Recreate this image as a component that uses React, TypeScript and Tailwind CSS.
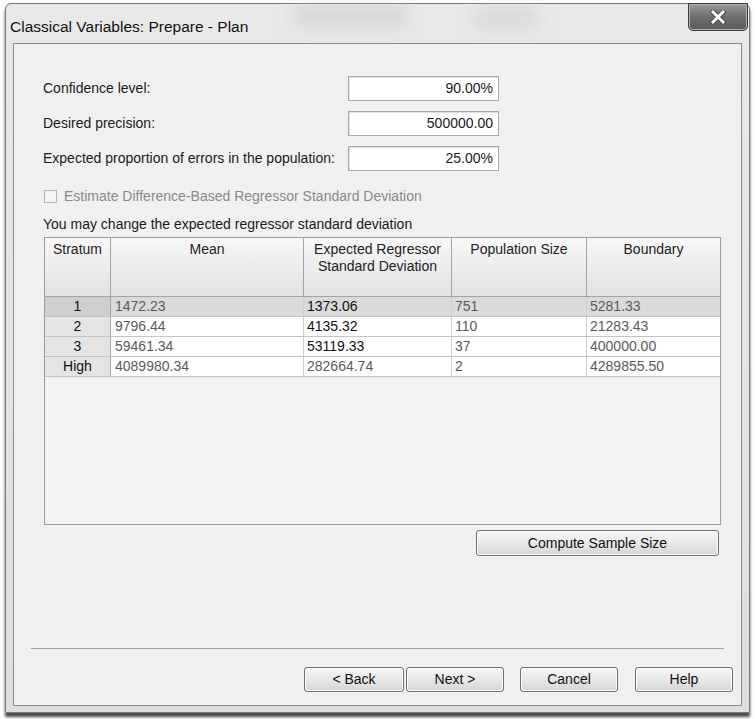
import React from 'react';

type Row = {
    stratum: string;
    mean: string;
    regressor: string;
    editable: boolean;
    size: string;
    boundary: string;
};

const rows: Row[] = [
    { stratum: '1', mean: '1472.23', regressor: '1373.06', editable: true, size: '751', boundary: '5281.33' },
    { stratum: '2', mean: '9796.44', regressor: '4135.32', editable: true, size: '110', boundary: '21283.43' },
    { stratum: '3', mean: '59461.34', regressor: '53119.33', editable: true, size: '37', boundary: '400000.00' },
    { stratum: 'High', mean: '4089980.34', regressor: '282664.74', editable: false, size: '2', boundary: '4289855.50' },
];

const fields = [
    { label: 'Confidence level:', value: '90.00%' },
    { label: 'Desired precision:', value: '500000.00' },
    { label: 'Expected proportion of errors in the population:', value: '25.00%' },
];

const WinButton = ({ children, className = '' }: { children: React.ReactNode; className?: string }) => (
    <button
        className={`h-[25px] rounded-[3px] border border-[#707070] bg-gradient-to-b from-[#f6f6f6] via-[#e8e8e8] to-[#d6d6d6] text-[14px] text-[#111] shadow-[inset_0_0_0_1px_#fbfbfb] ${className}`}
    >
        {children}
    </button>
);

const App = () => {
    return (
        <div className="w-[755px] h-[719px] bg-white overflow-hidden font-['Liberation_Sans',Arial,sans-serif] text-[#1a1a1a]">
            {/* Window frame */}
            <div className="relative ml-[5px] mt-[3px] w-[745px] h-[710px] rounded-t-[6px] border border-[#7a7a7a] bg-gradient-to-b from-[#e9e9e9] to-[#dedede] shadow-[0_4px_3px_#4a4a4a] flex flex-col">
                {/* Aero glass smudges behind the title */}
                <div className="absolute left-[285px] top-[2px] w-[120px] h-[20px] rounded-full bg-[#c4c4c4] blur-[9px] opacity-50" />
                <div className="absolute left-[465px] top-[4px] w-[70px] h-[20px] rounded-full bg-[#c8c8c8] blur-[9px] opacity-50" />

                {/* Title bar */}
                <div className="h-[39px] flex items-start shrink-0">
                    <span className="ml-[4px] mt-[15px] text-[15.5px] leading-none text-[#111]">Classical Variables: Prepare - Plan</span>
                    <button className="ml-auto mr-[1px] -mt-px w-[60px] h-[28px] rounded-b-[5px] border border-[#3c3c3c] bg-gradient-to-b from-[#9a9a9a] via-[#6e6e6e] to-[#5a5a5a] flex items-center justify-center shadow-[inset_0_0_0_1px_#b0b0b0]">
                        <svg width="16" height="14" viewBox="0 0 16 14">
                            <path d="M3 2 L13 12 M13 2 L3 12" stroke="#3a3a3a" strokeWidth="4.6" strokeLinecap="square" />
                            <path d="M3 2 L13 12 M13 2 L3 12" stroke="#ffffff" strokeWidth="3" strokeLinecap="square" />
                        </svg>
                    </button>
                </div>

                {/* Client area */}
                <div className="mx-[7px] flex-1 mb-[6px] border border-[#8c8c8c] bg-[#f0f0f0] flex flex-col">
                    {/* Plan parameters */}
                    <div className="pt-[32px] pl-[29px] flex flex-col gap-[10px]">
                        {fields.map((f) => (
                            <div key={f.label} className="flex items-center h-[25px]">
                                <span className="w-[305px] text-[14px]">{f.label}</span>
                                <div className="w-[151px] h-[25px] border border-[#a8a8a8] bg-white text-right pr-[5px] text-[14px] leading-[23px] shadow-[inset_1px_1px_0_#e2e2e2]">
                                    {f.value}
                                </div>
                            </div>
                        ))}
                    </div>

                    <div className="mt-[15px] pl-[30px] flex items-center gap-[7px] text-[14px] text-[#8a8a8a]">
                        <span className="w-[13px] h-[13px] border border-[#b4b4b4] bg-[#f4f4f4]" />
                        <span>Estimate Difference-Based Regressor Standard Deviation</span>
                    </div>

                    <div className="mt-[9px] pl-[29px] text-[14px] leading-[16px]">You may change the expected regressor standard deviation</div>

                    {/* Strata grid */}
                    <div className="mt-[5px] ml-[30px] w-[677px] h-[288px] border border-[#9c9c9c] bg-[#f2f2f2] text-[14px]">
                        <div className="grid grid-cols-[66px_193px_148px_135px_1fr] h-[59px] border-b border-[#a4a4a4] bg-gradient-to-b from-[#f7f7f7] to-[#e2e2e2] text-[#222] text-center leading-[17px]">
                            <div className="pt-[3px] border-r border-[#a4a4a4]">Stratum</div>
                            <div className="pt-[3px] border-r border-[#a4a4a4]">Mean</div>
                            <div className="pt-[3px] border-r border-[#a4a4a4]">Expected Regressor<br />Standard Deviation</div>
                            <div className="pt-[3px] border-r border-[#a4a4a4]">Population Size</div>
                            <div className="pt-[3px]">Boundary</div>
                        </div>
                        {rows.map((r, i) => (
                            <div
                                key={r.stratum}
                                className={`grid grid-cols-[66px_193px_148px_135px_1fr] h-[20px] leading-[19px] border-b border-[#c4c4c4] ${i === 0 ? 'bg-[#dadada]' : 'bg-white'}`}
                            >
                                <div className={`text-center text-[#111] border-r border-[#a4a4a4] ${i === 0 ? 'bg-[#cfcfcf]' : 'bg-[#e4e4e4]'}`}>{r.stratum}</div>
                                <div className="pl-[4px] text-[#5a5a5a] border-r border-[#cfcfcf]">{r.mean}</div>
                                <div className={`pl-[3px] border-r border-[#cfcfcf] ${r.editable ? 'text-[#111] font-medium' : 'text-[#5a5a5a]'}`}>{r.regressor}</div>
                                <div className="pl-[3px] text-[#5a5a5a] border-r border-[#cfcfcf]">{r.size}</div>
                                <div className="pl-[3px] text-[#5a5a5a]">{r.boundary}</div>
                            </div>
                        ))}
                    </div>

                    <div className="mt-[5px] ml-[462px]">
                        <WinButton className="w-[243px] h-[26px]">Compute Sample Size</WinButton>
                    </div>

                    {/* Separator and wizard buttons */}
                    <div className="mt-[92px] mx-[17px] h-[2px] border-t border-[#a0a0a0] border-b-white" />

                    <div className="mt-[17px] flex pl-[290px]">
                        <WinButton className="w-[100px]">&lt; Back</WinButton>
                        <WinButton className="w-[98px] ml-[2px] border-[#555]">Next &gt;</WinButton>
                        <WinButton className="w-[98px] ml-[16px]">Cancel</WinButton>
                        <WinButton className="w-[98px] ml-[17px]">Help</WinButton>
                    </div>
                </div>
            </div>
        </div>
    );
};

export default App;
